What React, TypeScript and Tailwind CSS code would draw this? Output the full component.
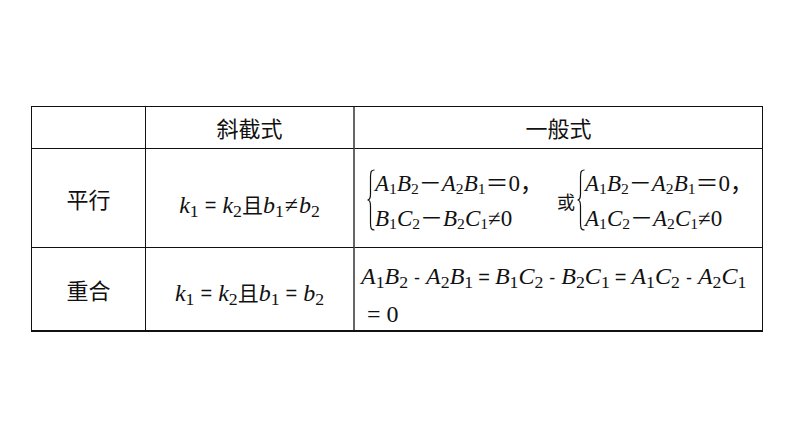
import type { ReactNode } from 'react'

// italic letter with a low, large subscript (MathType look)
function V({ c, s }: { c: string; s: string }) {
  return (
    <span className="font-['Liberation_Serif','Times_New_Roman',serif]">
      <i>{c}</i>
      <span className="text-[0.74em] relative top-[0.2em]">{s}</span>
    </span>
  )
}

// italic letter with a tight subscript (typeset look)
function T({ c, s }: { c: string; s: string }) {
  return (
    <span className="font-['Liberation_Serif','Times_New_Roman',serif]">
      <i>{c}</i>
      <span className="text-[0.68em] relative top-[0.16em]">{s}</span>
    </span>
  )
}

function Brace({ children }: { children: ReactNode }) {
  return (
    <div className="flex items-stretch">
      <svg width="8" height="62" viewBox="0 0 8 62" className="shrink-0 mt-[3px]">
        <path
          d="M7.5 1 C4 1 3.5 3 3.5 8 L3.5 25 C3.5 29 2.5 31 0.5 31 C2.5 31 3.5 33 3.5 37 L3.5 54 C3.5 59 4 61 7.5 61"
          fill="none"
          stroke="#111"
          strokeWidth="1.2"
        />
      </svg>
      <div className="flex flex-col leading-[31px]">{children}</div>
    </div>
  )
}

function Minus() {
  return <span className="font-['Noto_Sans_CJK_SC',sans-serif]">－</span>
}

function Eq({ gap = 'mx-[6px]' }: { gap?: string }) {
  return <span className={`${gap} text-[20px] font-['Liberation_Sans',Arial,sans-serif]`}>=</span>
}

function Dash() {
  return <span className="mx-[6px] text-[18px] font-['Liberation_Sans',Arial,sans-serif]">-</span>
}

function Pair({ second }: { second: 'B' | 'A' }) {
  return (
    <>
      <div>
        <T c="A" s="1" />
        <T c="B" s="2" />
        <Minus />
        <T c="A" s="2" />
        <T c="B" s="1" />
        <span className="font-['Noto_Sans_CJK_SC',sans-serif]">＝</span>
        <span className="font-['Liberation_Serif',serif]">0</span>
        <span className="font-['Noto_Sans_CJK_SC',sans-serif]">，</span>
      </div>
      <div>
        <T c={second} s="1" />
        <T c="C" s="2" />
        <Minus />
        <T c={second} s="2" />
        <T c="C" s="1" />
        <span className="font-['Liberation_Serif',serif]">≠0</span>
      </div>
    </>
  )
}

export default function App() {
  return (
    <div className="w-[794px] h-[447px] bg-white pt-[106px] pl-[31px] text-[#111] font-['Liberation_Serif',serif]">
      <div className="w-[732px] grid grid-cols-[114px_209px_1fr] grid-rows-[41px_99px_83px] border-t border-b-2 border-l border-r border-[#111]">
        <div className="border-r border-[#111]" />
        <div className="border-r-2 border-[#666] flex items-center justify-center text-[22px] font-['Noto_Sans_CJK_SC',sans-serif]">
          斜截式
        </div>
        <div className="flex items-center justify-center text-[22px] font-['Noto_Sans_CJK_SC',sans-serif]">
          一般式
        </div>

        <div className="border-t border-r border-[#111] flex items-center justify-center text-[22px] font-['Noto_Sans_CJK_SC',sans-serif]">
          平行
        </div>
        <div className="border-t border-r-2 border-t-[#111] border-r-[#666] flex items-center justify-center pt-[14px] text-[24px]">
          <V c="k" s="1" />
          <Eq />
          <V c="k" s="2" />
          <span className="font-['Noto_Sans_CJK_SC',sans-serif] text-[21px]">且</span>
          <V c="b" s="1" />
          <span className="mx-[1px] font-['Liberation_Serif',serif]">≠</span>
          <V c="b" s="2" />
        </div>
        <div className="border-t border-[#111] flex items-center pl-[12px] pt-[6px] text-[23px]">
          <Brace>
            <Pair second="B" />
          </Brace>
          <span className="font-['Noto_Sans_CJK_SC',sans-serif] text-[18px] ml-[14px] mr-[2px]">或</span>
          <Brace>
            <Pair second="A" />
          </Brace>
        </div>

        <div className="border-t border-r border-[#111] flex items-center justify-center text-[22px] font-['Noto_Sans_CJK_SC',sans-serif]">
          重合
        </div>
        <div className="border-t border-r-2 border-t-[#111] border-r-[#666] flex items-center justify-center pt-[8px] text-[24px]">
          <V c="k" s="1" />
          <Eq />
          <V c="k" s="2" />
          <span className="font-['Noto_Sans_CJK_SC',sans-serif] text-[21px]">且</span>
          <V c="b" s="1" />
          <Eq />
          <V c="b" s="2" />
        </div>
        <div className="border-t border-[#111] flex flex-col pt-[10px] pl-[6px] text-[24px] leading-[36px]">
          <div className="whitespace-nowrap">
            <V c="A" s="1" />
            <V c="B" s="2" />
            <Dash />
            <V c="A" s="2" />
            <V c="B" s="1" />
            <Eq gap="mx-[5px]" />
            <V c="B" s="1" />
            <V c="C" s="2" />
            <Dash />
            <V c="B" s="2" />
            <V c="C" s="1" />
            <Eq gap="mx-[5px]" />
            <V c="A" s="1" />
            <V c="C" s="2" />
            <Dash />
            <V c="A" s="2" />
            <V c="C" s="1" />
          </div>
          <div className="pl-[6px]">= 0</div>
        </div>
      </div>
    </div>
  )
}
